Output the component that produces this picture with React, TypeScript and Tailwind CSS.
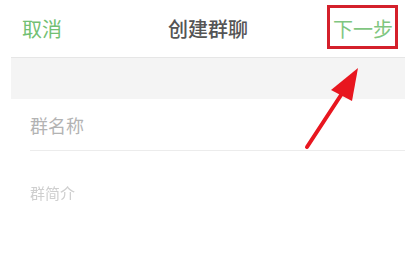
import React from 'react';

const font = { fontFamily: '"Noto Sans CJK SC", "Noto Sans", sans-serif' };

export default function App() {
  return (
    <div className="relative w-[405px] h-[270px] bg-white overflow-hidden" style={font}>
      {/* Top bar */}
      <div className="ml-[11px] h-[58px] grid grid-cols-[1fr_auto_1fr] items-center border-b border-[#e6e6e6]">
        <span className="pl-[11px] text-[20px] text-[#72c072]">取消</span>
        <span className="text-[20px] font-medium text-[#555]">创建群聊</span>
        <span className="justify-self-end pr-[12px] text-[20px] text-[#80c680]">下一步</span>
      </div>

      {/* Spacer band */}
      <div className="ml-[11px] h-[41px] bg-[#f4f4f4]" />

      {/* Form rows */}
      <div className="ml-[30px] h-[52px] flex items-center border-b border-[#ececec] pt-[2px]">
        <span className="text-[18px] text-[#b3b3b3]">群名称</span>
      </div>
      <div className="ml-[30px] pt-[29px]">
        <span className="text-[15px] leading-none text-[#cfcfcf] blur-[0.4px]">群简介</span>
      </div>

      {/* Highlight box */}
      <div className="absolute left-[327px] top-[5px] w-[71px] h-[44px] border-[3px] border-[#d4202b]" />

      {/* Arrow */}
      <svg className="absolute left-0 top-0 pointer-events-none" width="405" height="270">
        <line x1="307" y1="147" x2="343" y2="92" stroke="#e8161f" strokeWidth="4" strokeLinecap="round" />
        <polygon points="358,68 331,90 352,101" fill="#e8161f" />
      </svg>
    </div>
  );
}
